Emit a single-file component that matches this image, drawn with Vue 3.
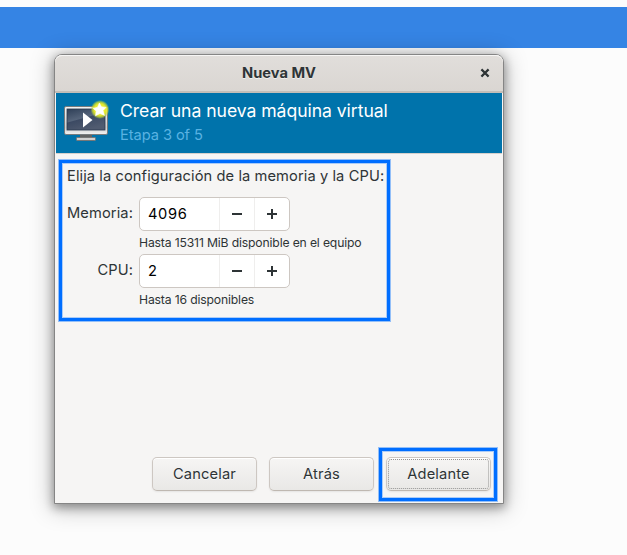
<script setup>
import { ref } from 'vue'

const fields = ref([
  { label: 'Memoria:', value: '4096', hint: 'Hasta 15311 MiB disponible en el equipo' },
  { label: 'CPU:', value: '2', hint: 'Hasta 16 disponibles' },
])
</script>

<template>
  <div class="desktop">
    <div class="stripe"></div>
    <section class="window">
      <header class="titlebar">
        <span class="title">Nueva MV</span>
        <svg class="close" width="10" height="10" viewBox="0 0 10 10">
          <path d="M1.6 2.6 8.4 9.4M8.4 2.6 1.6 9.4" stroke="#fff" stroke-width="2" opacity=".6" />
          <path d="M1.4 1.4 8.6 8.6M8.6 1.4 1.4 8.6" stroke="#2e3436" stroke-width="2.2" />
        </svg>
      </header>
      <div class="banner">
        <svg class="logo" width="48" height="44" viewBox="0 0 48 44">
          <defs>
            <linearGradient id="frame" x1="0" y1="0" x2="0" y2="1">
              <stop offset="0" stop-color="#f4f4f4" />
              <stop offset=".75" stop-color="#cfcfcf" />
              <stop offset="1" stop-color="#f2f2f2" />
            </linearGradient>
            <linearGradient id="screen" x1="0" y1="0" x2=".5" y2="1">
              <stop offset="0" stop-color="#2e3f57" />
              <stop offset=".5" stop-color="#56657b" />
              <stop offset=".54" stop-color="#3c4a63" />
              <stop offset="1" stop-color="#505b70" />
            </linearGradient>
            <radialGradient id="glow">
              <stop offset="0" stop-color="#f8f560" />
              <stop offset=".6" stop-color="#e6ea28" />
              <stop offset=".8" stop-color="#d0df30" stop-opacity=".7" />
              <stop offset="1" stop-color="#7fbd60" stop-opacity="0" />
            </radialGradient>
          </defs>
          <rect x="16" y="34" width="12" height="4" fill="#626262" />
          <rect x="12.5" y="37.5" width="19" height="3" rx=".7" fill="#d0d0d0" stroke="#777" />
          <rect x=".5" y="6.5" width="43" height="28" rx="1.5" fill="url(#frame)" stroke="#777b7d" />
          <rect x="3" y="9" width="38" height="21" fill="url(#screen)" stroke="#29394e" stroke-width=".8" />
          <path d="M19 12.5v15l9.5-7.5z" fill="#fff" />
          <circle cx="36" cy="9.5" r="9.6" fill="url(#glow)" />
          <path
            d="M35.4 3 37.4 6.8 42 7.4 39 10.6 40.5 15.4 36 13.5 31.5 15.8 32.2 11 29.2 8.4 33.6 7.2z"
            fill="#fff" stroke="#fff" stroke-width=".6" stroke-linejoin="round"
          />
        </svg>
        <div class="heading">
          <div class="heading-main">Crear una nueva máquina virtual</div>
          <div class="heading-sub">Etapa 3 of 5</div>
        </div>
      </div>
      <main class="content">
        <p class="intro">Elija la configuración de la memoria y la CPU:</p>
        <div v-for="f in fields" :key="f.label" class="field">
          <label class="label">{{ f.label }}</label>
          <div class="spin">
            <span class="value">{{ f.value }}</span>
            <span class="step">
              <svg width="12" height="12" viewBox="0 0 12 12"><path d="M1 6h10" stroke="#2e3436" stroke-width="2" /></svg>
            </span>
            <span class="step">
              <svg width="12" height="12" viewBox="0 0 12 12"><path d="M1 6h10M6 1v10" stroke="#2e3436" stroke-width="2" /></svg>
            </span>
          </div>
          <div class="hint">{{ f.hint }}</div>
        </div>
      </main>
      <footer class="actions">
        <button class="btn">Cancelar</button>
        <button class="btn">Atrás</button>
        <button class="btn focused">Adelante</button>
      </footer>
      <div class="mark mark-form"></div>
      <div class="mark mark-next"></div>
    </section>
  </div>
</template>

<style>
body {
  background: #fcfcfc;
}
</style>

<style scoped>
.desktop {
  box-sizing: border-box;
  width: 627px;
  height: 555px;
  padding-top: 7px;
  overflow: hidden;
  background: #fcfcfc;
  color: #2e3436;
  font-family: Inter, sans-serif;
  font-size: 14.67px;
}
.stripe {
  height: 41px;
  background: #3584e4;
}
.window {
  position: relative;
  box-sizing: border-box;
  display: flex;
  flex-direction: column;
  width: 450px;
  height: 450px;
  margin: 6px 0 0 54px;
  border: 1px solid #858585;
  border-radius: 8px 8px 0 0;
  background: #f6f5f4;
  box-shadow: 0 3px 10px 1px rgba(0, 0, 0, 0.32), 0 3px 22px 2px rgba(0, 0, 0, 0.25);
}
.titlebar {
  box-sizing: border-box;
  display: grid;
  grid-template-columns: 1fr auto 1fr;
  align-items: center;
  height: 38px;
  padding-bottom: 1px;
  border-bottom: 2px solid #c3beb8;
  border-radius: 7px 7px 0 0;
  background: linear-gradient(#e1dedb, #dad6d2);
  box-shadow: inset 0 1px #f7f6f5;
}
.title {
  grid-column: 2;
  font-weight: 700;
  text-shadow: 0 1px rgba(255, 255, 255, 0.6);
}
.close {
  justify-self: end;
  margin-right: 13px;
}
.banner {
  box-sizing: border-box;
  display: flex;
  height: 61px;
  margin: 0 1px;
  padding: 7px 0 0 8px;
  border-bottom: 1px solid #d5d0cc;
  background: #0073ab;
}
.heading {
  margin-left: 8px;
  white-space: nowrap;
}
.heading-main {
  height: 22px;
  line-height: 22px;
  color: #fff;
  font-size: 17.6px;
  letter-spacing: -0.05px;
}
.heading-sub {
  height: 27px;
  line-height: 27px;
  color: #59b2e2;
  letter-spacing: -0.08px;
}
.content {
  padding: 11px 0 0 12px;
}
.intro {
  height: 22px;
  margin: 0 0 10px;
  line-height: 22px;
  letter-spacing: 0.09px;
  white-space: nowrap;
}
.field {
  display: grid;
  grid-template-columns: 66px 151px;
  grid-template-rows: 34px 23px;
  column-gap: 6px;
}
.label {
  line-height: 32px;
  letter-spacing: 0.1px;
  text-align: right;
  white-space: nowrap;
}
.spin {
  box-sizing: border-box;
  display: grid;
  grid-template-columns: 1fr 35px 35px;
  border: 1px solid #cdc7c2;
  border-radius: 5px;
  background: #fff;
}
.value {
  padding-left: 8px;
  color: #000;
  line-height: 32px;
  letter-spacing: 0.65px;
}
.step {
  display: flex;
  align-items: center;
  justify-content: center;
  border-left: 1px solid #efeeed;
}
.hint {
  grid-column: 2;
  line-height: 23px;
  font-size: 12.2px;
  letter-spacing: -0.16px;
  white-space: nowrap;
}
.actions {
  display: flex;
  gap: 12px;
  justify-content: flex-end;
  margin-top: auto;
  padding: 0 12px 12px 0;
}
.btn {
  box-sizing: border-box;
  width: 105px;
  height: 34px;
  padding: 0;
  border: 1px solid #cdc7c2;
  border-bottom-color: #bfb8b1;
  border-radius: 5px;
  background: linear-gradient(#f6f5f4, #e9e8e6);
  box-shadow: inset 0 1px #fff, 0 1px 2px rgba(0, 0, 0, 0.07);
  color: #2e3436;
  font: inherit;
  letter-spacing: 0.15px;
  text-shadow: 0 1px rgba(255, 255, 255, 0.7);
}
.focused {
  outline: 1px dotted #949392;
  outline-offset: -3px;
}
.mark {
  position: absolute;
  box-sizing: border-box;
  border: 3px solid #006eff;
  box-shadow: 0 0 0 1px rgba(0, 110, 255, 0.4), inset 0 0 0 1px rgba(0, 110, 255, 0.3);
}
.mark-form {
  left: 4px;
  top: 105px;
  width: 331px;
  height: 161px;
}
.mark-next {
  left: 324px;
  top: 393px;
  width: 118px;
  height: 53px;
}
</style>
